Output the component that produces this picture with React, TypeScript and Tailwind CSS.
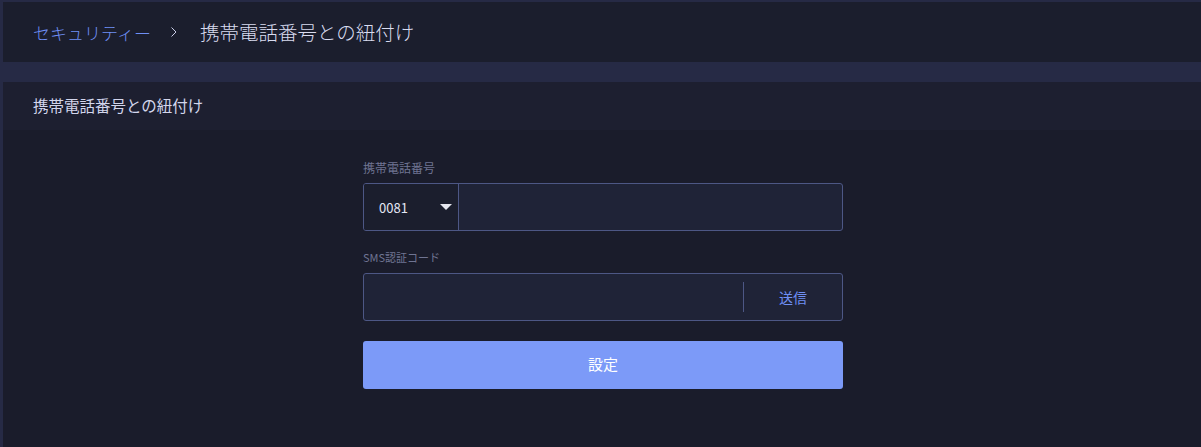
import React from "react";

export default function App() {
  return (
    <div
      className="w-[1201px] h-[447px] bg-[#262a45] pt-[2px] pl-[3px] overflow-hidden"
      style={{ fontFamily: '"Noto Sans CJK JP", "Noto Sans", sans-serif' }}
    >
      <div className="h-[60px] bg-[#1b1e2d] flex items-center pl-[30px]">
        <span className="text-[17px] text-[#6f8ff5] leading-none font-light">セキュリティー</span>
        <svg className="ml-[20px] mr-[23px]" width="6" height="10" viewBox="0 0 6 10">
          <path d="M0.5 0.5 L5 5 L0.5 9.5" fill="none" stroke="#c9cde6" strokeWidth="1" />
        </svg>
        <span className="text-[19.5px] text-[#d9dcf0] leading-none font-light">携帯電話番号との紐付け</span>
      </div>
      <div className="mt-[20px] h-[365px] bg-[#1a1c2b] flex flex-col">
        <div className="h-[48px] bg-[#1d1f30] flex items-center pl-[30px]">
          <span className="text-[15.5px] text-[#d3d6ec] leading-none">携帯電話番号との紐付け</span>
        </div>
        <div className="flex justify-center pt-[32px] pl-[2px]">
          <div className="w-[480px] flex flex-col">
            <label className="text-[12px] text-[#6f7492] leading-none h-[12px]">携帯電話番号</label>
            <div className="mt-[9px] h-[48px] flex border border-[#4d5785] rounded-[3px] bg-[#1f2337] overflow-hidden">
              <div className="w-[95px] bg-[#1b1e2d] border-r border-[#4d5785] flex items-center pl-[15px] pr-[6px]">
                <span className="text-[13px] text-[#e4e6f4] leading-none flex-1">0081</span>
                <svg width="12" height="7" viewBox="0 0 12 7">
                  <path d="M0 0 L12 0 L6 6 Z" fill="#e6e7ef" />
                </svg>
              </div>
              <div className="flex-1" />
            </div>
            <label className="mt-[21px] text-[11px] text-[#6f7492] leading-none h-[11px]">SMS認証コード</label>
            <div className="mt-[10px] h-[48px] flex items-center border border-[#4d5785] rounded-[3px] bg-[#1f2337]">
              <div className="flex-1" />
              <div className="w-px h-[30px] bg-[#4d5785]" />
              <div className="w-[98px] flex justify-center items-center">
                <span className="text-[14px] text-[#6f8ff5] leading-none">送信</span>
              </div>
            </div>
            <button className="mt-[20px] h-[48px] w-full rounded-[3px] bg-[#7c9af8] text-white text-[15px] leading-none pb-[3px]">
              設定
            </button>
          </div>
        </div>
      </div>
    </div>
  );
}
